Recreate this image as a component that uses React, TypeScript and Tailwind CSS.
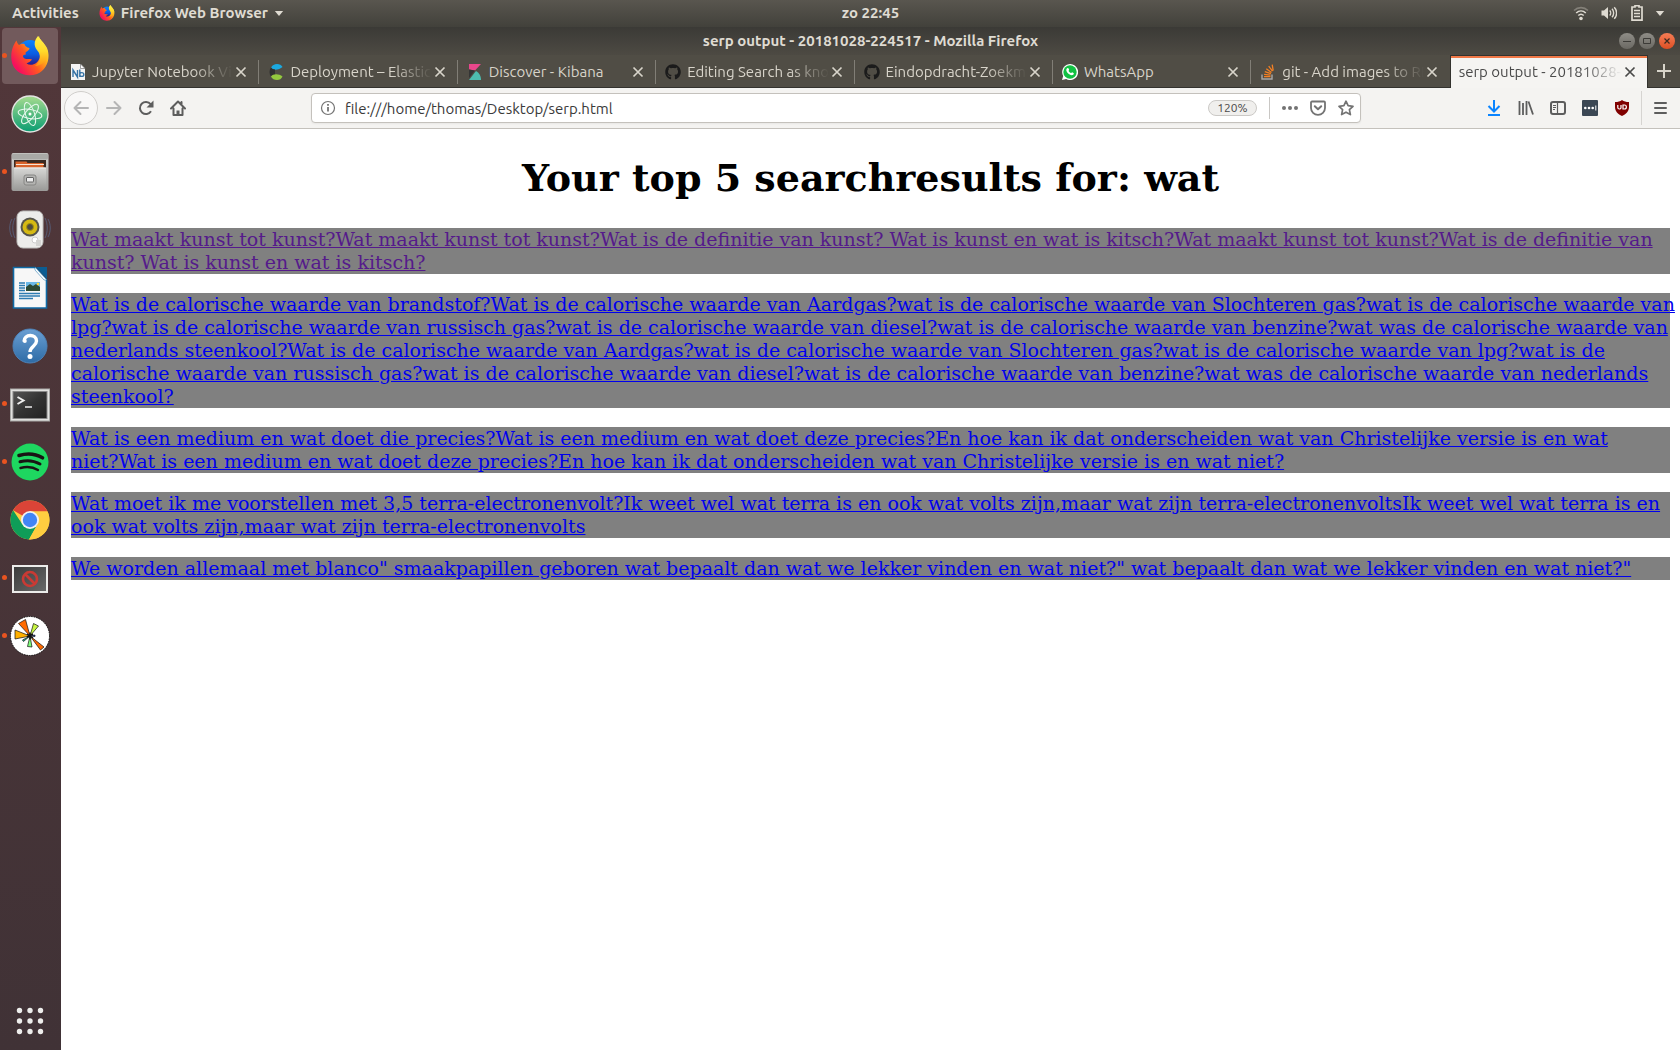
import { Fragment, type ReactNode } from 'react';
import { FaGithub } from 'react-icons/fa';

function FirefoxLogo({ id, className }: { id: string; className: string }) {
  return (
    <svg viewBox="0 0 38 40" className={className} aria-hidden="true">
      <defs>
        <linearGradient id={id + 'body'} x1="0.9" y1="0.1" x2="0.1" y2="0.75">
          <stop offset="0" stopColor="#fff44f" />
          <stop offset="0.3" stopColor="#ffb21a" />
          <stop offset="0.6" stopColor="#ff5a1f" />
          <stop offset="1" stopColor="#f50f5e" />
        </linearGradient>
        <linearGradient id={id + 'tail'} x1="0.3" y1="0" x2="0.3" y2="1">
          <stop offset="0" stopColor="#fff24a" />
          <stop offset="0.5" stopColor="#ffdb2b" />
          <stop offset="1" stopColor="#ff9412" />
        </linearGradient>
        <linearGradient id={id + 'globe'} x1="0.5" y1="0" x2="0.5" y2="1">
          <stop offset="0" stopColor="#0a84ff" />
          <stop offset="0.55" stopColor="#0b5be0" />
          <stop offset="1" stopColor="#2d1480" />
        </linearGradient>
      </defs>
      <circle cx="19" cy="17" r="13" fill={`url(#${id}globe)`} />
      <path
        d="M5.500 4.500 C6 7 7 8 8 9 C10 7.500 12 7.500 13.500 8 C14 10 15.500 11.500 18.500 12 C18.500 14 17 14.500 14.500 16.500 L14.800 18.500 C12 18.500 11.500 20 12.500 21.500 C14 24 19 22.500 21 23.500 C20 25.500 17 26.500 15.500 27.500 C20 30.500 27 28 28.500 22 C30 15 25 12 25.500 6 C26 3 26.500 2 28 0 C28.500 4 33 6 36 12 C40 22 36 34 26 38 C14 42 2 36 0.500 24 C-0.500 16 2 9 5.500 4.500 Z"
        fill={`url(#${id}body)`}
      />
      <path
        d="M27 0 C22 6 23 11 27.500 16 C30 20 30 25 24 30 C31 30 36 25 37 17 C36 10 30 5 27 0 Z"
        fill={`url(#${id}tail)`}
      />
    </svg>
  );
}

function AtomLogo() {
  return (
    <svg viewBox="0 0 40 40" className="size-10" aria-hidden="true">
      <defs>
        <linearGradient id="atombg" x1="0" y1="0" x2="0" y2="1">
          <stop offset="0" stopColor="#a6dc8f" />
          <stop offset="1" stopColor="#0a9d72" />
        </linearGradient>
      </defs>
      <circle cx="20" cy="20" r="18" fill="url(#atombg)" stroke="#e4e4e2" strokeWidth="1.300" />
      <g fill="none" stroke="#e8f8ee" strokeWidth="1">
        <ellipse cx="20" cy="20" rx="12" ry="4.500" transform="rotate(10 20 20)" />
        <ellipse cx="20" cy="20" rx="12" ry="4.500" transform="rotate(72 20 20)" />
        <ellipse cx="20" cy="20" rx="12" ry="4.500" transform="rotate(130 20 20)" />
      </g>
      <circle cx="20" cy="20" r="1.500" fill="#fff" />
    </svg>
  );
}

function FilesLogo() {
  return (
    <svg viewBox="0 0 40 40" className="size-10" aria-hidden="true">
      <defs>
        <linearGradient id="cab" x1="0" y1="0" x2="0" y2="1">
          <stop offset="0" stopColor="#d8d8d6" />
          <stop offset="1" stopColor="#9b9b99" />
        </linearGradient>
      </defs>
      <rect x="1.500" y="1" width="37" height="38" rx="2" fill="url(#cab)" />
      <rect x="2" y="1.500" width="36" height="6" rx="1.500" fill="#a9a9a6" />
      <rect x="4" y="8" width="32" height="8" fill="#3a2a22" />
      <path d="M5.500 9.500h11l1 1.500h16v5h-28z" fill="#d8622a" />
      <path d="M6 12.500h28" stroke="#f6e4d4" strokeWidth="1" />
      <rect x="4" y="15.500" width="32" height="22.500" rx="1" fill="url(#cab)" />
      <path d="M4 16h32" stroke="#f0f0ee" />
      <rect x="14" y="23" width="12" height="10" rx="2" fill="#b4b4b2" stroke="#868684" />
      <rect x="16.500" y="25.500" width="7" height="4.500" rx="0.500" fill="#eee" stroke="#666" />
    </svg>
  );
}

function SpeakerLogo() {
  return (
    <svg viewBox="0 0 44 40" className="h-10 w-11" aria-hidden="true">
      <g fill="none" stroke="#5a6a8c" strokeWidth="1" opacity="0.700">
        <path d="M7 8c-3 6-3 14 0 20M4 9c-3 5-3 13 0 18M37 8c3 6 3 14 0 20M40 9c3 5 3 13 0 18" />
      </g>
      <rect x="9" y="1" width="26" height="37" rx="6" fill="#ececea" stroke="#bdbdbb" />
      <circle cx="22" cy="17" r="9.500" fill="#55544c" />
      <circle cx="22" cy="17" r="7.500" fill="#d5b913" />
      <circle cx="22" cy="17" r="3.500" fill="#4c4a40" stroke="#a8920d" />
      <circle cx="27" cy="30" r="3" fill="#fff" stroke="#ccc" />
      <rect x="28" y="30" width="5" height="6" fill="#d4d4d2" />
    </svg>
  );
}

function WriterLogo() {
  return (
    <svg viewBox="0 0 40 44" className="h-11 w-10" aria-hidden="true">
      <path d="M3.500 1.500H25L36.500 14v28H3.500z" fill="#f7f7f7" stroke="#0f6aa5" strokeWidth="1.600" />
      <path d="M26 1h11v12z" fill="#0b5d93" />
      <path d="M25 1v3l9 10h3z" fill="#fff" stroke="#0f6aa5" strokeWidth="0.500" />
      <g stroke="#2e7cb2" strokeWidth="1.500">
        <path d="M9 17h6M9 19.500h6M9 22h6M9 24.500h6M9 27.500h21M9 30h21M9 32.500h14" />
      </g>
      <rect x="16" y="16" width="14" height="9" fill="#6ab9e8" />
      <path d="M16 25v-4l4-3 3 2 3-2 4 3v4z" fill="#2d4a35" />
      <circle cx="28" cy="18" r="1.300" fill="#ffd93b" />
    </svg>
  );
}

function HelpLogo() {
  return (
    <svg viewBox="0 0 40 40" className="size-10" aria-hidden="true">
      <defs>
        <linearGradient id="helpbg" x1="0" y1="0" x2="0" y2="1">
          <stop offset="0" stopColor="#6a9fd3" />
          <stop offset="1" stopColor="#2e6ca6" />
        </linearGradient>
      </defs>
      <circle cx="20" cy="20" r="17" fill="url(#helpbg)" stroke="#4d82b8" />
      <path d="M14 15.500c0-8 12.500-8 12.500-0.500 0 5-6.500 5.500-6.500 11" fill="none" stroke="#fff" strokeWidth="3.400" />
      <circle cx="14.800" cy="15" r="2" fill="#fff" />
      <circle cx="20" cy="30.500" r="2.500" fill="#fff" />
    </svg>
  );
}

function TerminalLogo() {
  return (
    <svg viewBox="0 0 40 36" className="h-9 w-10" aria-hidden="true">
      <defs>
        <linearGradient id="termbg" x1="0" y1="0" x2="1" y2="1">
          <stop offset="0" stopColor="#555" />
          <stop offset="0.500" stopColor="#333" />
          <stop offset="1" stopColor="#222" />
        </linearGradient>
      </defs>
      <rect x="0.500" y="3" width="39" height="32" fill="#e2e2e0" stroke="#a9a9a7" />
      <rect x="3" y="5.500" width="34" height="27" fill="url(#termbg)" stroke="#888" />
      <path d="M7.500 11l6 3.500-6 3.500" fill="none" stroke="#eee" strokeWidth="2" />
      <path d="M15 21h7" stroke="#eee" strokeWidth="1.500" />
    </svg>
  );
}

function SpotifyLogo() {
  return (
    <svg viewBox="0 0 40 40" className="size-10" aria-hidden="true">
      <circle cx="20" cy="20" r="18.500" fill="#1ed760" />
      <g fill="none" stroke="#191414" strokeLinecap="round">
        <path d="M9 13.500c8-2.500 17-1.500 23.500 2.300" strokeWidth="3.600" />
        <path d="M10 19.800c7-2 14-1.200 20 2.200" strokeWidth="3" />
        <path d="M10.500 26c6-1.600 12.500-1 17.500 2" strokeWidth="2.400" />
      </g>
    </svg>
  );
}

function ChromeLogo() {
  return (
    <svg viewBox="0 0 40 40" className="size-10" aria-hidden="true">
      <circle cx="20" cy="20" r="19.500" fill="#ffcd40" />
      <path d="M20 20L3.100 10.250A19.500 19.500 0 0 1 37.500 11.500H20z" fill="#db4437" />
      <path d="M3.100 10.250A19.500 19.500 0 0 0 19 39.500L27.400 24.500 12.500 24.500z" fill="#0f9d58" />
      <path d="M20 11.500h17.500A19.500 19.500 0 0 1 19 39.500l8.400-15z" fill="#ffcd40" />
      <circle cx="20" cy="20" r="9" fill="#f1f1f1" />
      <circle cx="20" cy="20" r="7.200" fill="#4285f4" />
    </svg>
  );
}

function BlockedWindowLogo() {
  return (
    <svg viewBox="0 0 40 40" className="size-10" aria-hidden="true">
      <defs>
        <linearGradient id="blk" x1="0" y1="0" x2="1" y2="1">
          <stop offset="0" stopColor="#3a3a3a" />
          <stop offset="1" stopColor="#6a6a6a" />
        </linearGradient>
      </defs>
      <rect x="3" y="8" width="34" height="26" fill="url(#blk)" stroke="#ececea" strokeWidth="2" />
      <circle cx="20" cy="21" r="7" fill="none" stroke="#c93a34" strokeWidth="2.600" />
      <path d="M15 16l10 10" stroke="#c93a34" strokeWidth="2.600" />
    </svg>
  );
}

function PlotLogo() {
  return (
    <svg viewBox="0 0 40 40" className="size-10" aria-hidden="true">
      <circle cx="20" cy="20" r="19.500" fill="#fff" stroke="#111" strokeWidth="1" strokeDasharray="1.500 1" />
      <g stroke="#111" strokeWidth="0.700">
        <path d="M20 20L8.500 7.500 15.500 3.500z" fill="#ff6a00" />
        <path d="M20 20L5 14v9z" fill="#ffb000" />
        <path d="M20 20l3.500-12.500 5 2.500z" fill="#c8f542" />
        <path d="M20 20l10.500 14 3.500-3z" fill="#ff6a00" />
        <path d="M20 20l-2.500 10.500 4.500 0.500z" fill="#7dff7a" />
        <path d="M20 20l-7.500 4 1 1.500z" fill="#1fb489" />
        <path d="M20 20l5-1v1.500z" fill="#1030c0" />
      </g>
      <path d="M17 18l6 4M20 16.500v7M17 21l6-3" stroke="#111" strokeWidth="1.500" />
    </svg>
  );
}

function CloseGlyph() {
  return (
    <svg viewBox="0 0 12 12" className="size-3" fill="none" stroke="currentColor" strokeWidth="1.700" aria-hidden="true">
      <path d="M1.500 1.500l9 9M10.500 1.500l-9 9" />
    </svg>
  );
}

type TabData = { title: string; icon?: ReactNode; fades?: boolean };

const tabs: TabData[] = [
  {
    title: 'Jupyter Notebook Vi',
    fades: true,
    icon: (
      <svg viewBox="0 0 16 16" className="size-4" aria-hidden="true">
        <path d="M1 0h9.500L15 4.500V16H1z" fill="#f4f4f4" />
        <path d="M10.500 0v4.500H15z" fill="#fff" stroke="#777" strokeWidth="0.700" />
        <path d="M3 13V6l4.500 7V6M9.800 5.500V13M9.800 10.500c0-2.500 4-2.500 4 0s-4 2.500-4 0" fill="none" stroke="#3673a5" strokeWidth="1.400" />
      </svg>
    ),
  },
  {
    title: 'Deployment – Elastic',
    fades: true,
    icon: (
      <svg viewBox="0 0 16 16" className="size-4" aria-hidden="true">
        <path d="M3 4C4 1 6.500 0 9 0c2.500 0 4.500 1 5.500 3-2 2-6 3-8.500 2.500C4.500 5.200 3.500 4.700 3 4z" fill="#1ba9e1" />
        <path d="M3 3.500C1 6 1 10 3 12.500c1-1 2.500-1.800 4-1.800V5.500C5.500 5.500 4 4.700 3 3.500z" fill="#303030" />
        <path d="M3 12.500C5 9.500 11 9.500 14.500 12.500c-1 2.500-3 3.500-5.500 3.500s-5-1-6-3.500z" fill="#93c83e" />
      </svg>
    ),
  },
  {
    title: 'Discover - Kibana',
    icon: (
      <svg viewBox="0 0 16 16" className="size-4" aria-hidden="true">
        <path d="M2 0h12L8 6.500 2 5.500z" fill="#e8478b" />
        <path d="M2 5.500l6 1L2 14z" fill="#353535" />
        <path d="M2 16L9 7c3 1.500 5 5 5 9z" fill="#4dbdb0" />
      </svg>
    ),
  },
  { title: 'Editing Search as kno', fades: true, icon: <FaGithub className="size-4 text-[#1b1b1b]" /> },
  { title: 'Eindopdracht-Zoekm', fades: true, icon: <FaGithub className="size-4 text-[#1b1b1b]" /> },
  {
    title: 'WhatsApp',
    icon: (
      <svg viewBox="0 0 16 16" className="size-4" aria-hidden="true">
        <path d="M0 16l1.200-4A8 8 0 1 1 4.200 15z" fill="#fff" />
        <circle cx="8" cy="8" r="6.700" fill="#12c143" />
        <path d="M5.200 4.200c1-.8 1.400 0 1.900 1.500.1.500-.7.900-.5 1.300.5 1 1.300 1.700 2.300 2.100.5.100.8-1 1.300-.8l1.600.9c.2 1.300-1 2-2 2C7 10.900 4.200 8 4.300 6c0-.7.300-1.300.9-1.800z" fill="#fff" />
      </svg>
    ),
  },
  {
    title: 'git - Add images to RE',
    fades: true,
    icon: (
      <svg viewBox="0 0 16 16" className="size-4" fill="none" aria-hidden="true">
        <path d="M2 10.500V15h10v-4.500" stroke="#a7a7a7" strokeWidth="1.400" />
        <path d="M4 12.700h6.500M4.100 10.300l6.400.8M4.800 7.600l6.100 2M6.300 4.800l5.200 3.700M8.700 2.200l3.800 5M12.200 0.600l1 6" stroke="#f48024" strokeWidth="1.300" />
      </svg>
    ),
  },
  { title: 'serp output - 20181028-2', fades: true },
];

function Tab({ tab, active }: { tab: TabData; active: boolean }) {
  return (
    <div
      role="tab"
      aria-selected={active}
      className={
        active
          ? 'flex h-full min-w-0 flex-1 items-center border-x border-t border-x-[#33322e] border-t-[#33322e] bg-[#f5f4f2] pr-[11px] pl-2 text-[#4a4a4a] shadow-[inset_0_2px_0_#f07746]'
          : 'flex h-full min-w-0 flex-1 items-center border-b border-[#33322e] pt-px pr-3 pl-[9px] text-[#d8d4ca]'
      }
    >
      {tab.icon && <span className="mr-1.5 shrink-0">{tab.icon}</span>}
      <span
        className={
          tab.fades
            ? 'min-w-0 flex-1 overflow-hidden text-[15px] leading-5 whitespace-nowrap [mask-image:linear-gradient(to_right,black_calc(100%-40px),transparent)]'
            : 'min-w-0 flex-1 overflow-hidden text-[15px] leading-5 whitespace-nowrap'
        }
      >
        {tab.title}
      </span>
      <button type="button" aria-label={'Close ' + tab.title} className="ml-0.5 shrink-0">
        <CloseGlyph />
      </button>
    </div>
  );
}

function ToolButton({ label, children, className }: { label: string; children: ReactNode; className?: string }) {
  return (
    <button type="button" aria-label={label} className={'flex h-8 w-8 shrink-0 items-center justify-center ' + (className ?? 'text-[#5d5d5d]')}>
      {children}
    </button>
  );
}

const stroke = { fill: 'none', stroke: 'currentColor', strokeWidth: 2, 'aria-hidden': true } as const;

const dock: { name: string; running?: boolean; icon: ReactNode }[] = [
  { name: 'Firefox Web Browser', running: true, icon: <FirefoxLogo id="dock" className="h-10 w-[38px]" /> },
  { name: 'Atom', icon: <AtomLogo /> },
  { name: 'Files', running: true, icon: <FilesLogo /> },
  { name: 'Rhythmbox', icon: <SpeakerLogo /> },
  { name: 'LibreOffice Writer', icon: <WriterLogo /> },
  { name: 'Help', icon: <HelpLogo /> },
  { name: 'Terminal', running: true, icon: <TerminalLogo /> },
  { name: 'Spotify', running: true, icon: <SpotifyLogo /> },
  { name: 'Google Chrome', icon: <ChromeLogo /> },
  { name: 'Window', running: true, icon: <BlockedWindowLogo /> },
  { name: 'Plot', running: true, icon: <PlotLogo /> },
];

const results: string[][] = [
  [
    'Wat maakt kunst tot kunst?Wat maakt kunst tot kunst?Wat is de definitie van kunst? Wat is kunst en wat is kitsch?Wat maakt kunst tot kunst?Wat is de definitie van',
    'kunst? Wat is kunst en wat is kitsch?',
  ],
  [
    'Wat is de calorische waarde van brandstof?Wat is de calorische waarde van Aardgas?wat is de calorische waarde van Slochteren gas?wat is de calorische waarde van',
    'lpg?wat is de calorische waarde van russisch gas?wat is de calorische waarde van diesel?wat is de calorische waarde van benzine?wat was de calorische waarde van',
    'nederlands steenkool?Wat is de calorische waarde van Aardgas?wat is de calorische waarde van Slochteren gas?wat is de calorische waarde van lpg?wat is de',
    'calorische waarde van russisch gas?wat is de calorische waarde van diesel?wat is de calorische waarde van benzine?wat was de calorische waarde van nederlands',
    'steenkool?',
  ],
  [
    'Wat is een medium en wat doet die precies?Wat is een medium en wat doet deze precies?En hoe kan ik dat onderscheiden wat van Christelijke versie is en wat',
    'niet?Wat is een medium en wat doet deze precies?En hoe kan ik dat onderscheiden wat van Christelijke versie is en wat niet?',
  ],
  [
    'Wat moet ik me voorstellen met 3,5 terra-electronenvolt?Ik weet wel wat terra is en ook wat volts zijn,maar wat zijn terra-electronenvoltsIk weet wel wat terra is en',
    'ook wat volts zijn,maar wat zijn terra-electronenvolts',
  ],
  [
    'We worden allemaal met blanco" smaakpapillen geboren wat bepaalt dan wat we lekker vinden en wat niet?" wat bepaalt dan wat we lekker vinden en wat niet?"',
  ],
];

function TopBar() {
  return (
    <header className="grid h-[27px] shrink-0 grid-cols-[61px_1fr_auto_1fr] items-center bg-linear-to-b from-[#59564f] to-[#42413b] pb-px text-[15px] leading-5 font-bold text-[#dfdbd2]">
      <div className="col-span-2 flex items-center pl-3">
        <button type="button">Activities</button>
        <button type="button" className="ml-5 flex items-center">
          <FirefoxLogo id="bar" className="mr-1.5 size-4" />
          Firefox Web Browser
          <svg viewBox="0 0 10 6" className="ml-1.5 h-[5px] w-2.5" aria-hidden="true">
            <path d="M0 0h10L5 6z" fill="currentColor" />
          </svg>
        </button>
      </div>
      <time>zo 22:45</time>
      <button type="button" aria-label="System menu" className="flex items-center justify-self-end pr-[15px]">
        <svg viewBox="0 0 16 16" className="mr-3 size-4" fill="none" stroke="currentColor" strokeWidth="1.600" aria-hidden="true">
          <path d="M1 5.500c4-3.800 10-3.800 14 0" opacity="0.350" />
          <path d="M3.200 8c2.800-2.600 6.800-2.600 9.600 0M5.300 10.500c1.600-1.500 3.800-1.500 5.400 0" />
          <circle cx="8" cy="13.500" r="1.800" fill="currentColor" stroke="none" />
        </svg>
        <svg viewBox="0 0 16 16" className="mr-3.5 size-4" fill="none" stroke="currentColor" strokeWidth="1.400" aria-hidden="true">
          <path d="M0.500 5.500h2.500L7 2v12L3 10.500H0.500z" fill="currentColor" stroke="none" />
          <path d="M8.700 5.500c1.300 1.300 1.300 3.700 0 5M11 3.800c2.200 2.200 2.200 6.200 0 8.400M13.200 2.200c3.200 3.200 3.200 8.400 0 11.600" />
        </svg>
        <svg viewBox="0 0 12 16" className="mr-3 h-4 w-3" fill="none" stroke="currentColor" aria-hidden="true">
          <path d="M4 2V0.700h4V2h3v13.200H1V2z" strokeWidth="1.700" />
          <path d="M3 5.500h6M3 8.500h6M3 11.500h6" strokeWidth="1.600" />
        </svg>
        <svg viewBox="0 0 10 6" className="h-[5px] w-2.5" aria-hidden="true">
          <path d="M0 0h10L5 6z" fill="currentColor" />
        </svg>
      </button>
    </header>
  );
}

function Dock() {
  return (
    <nav aria-label="Dock" className="flex w-[61px] shrink-0 flex-col bg-linear-to-b from-[#52373a] to-[#403236]">
      {dock.map((item, i) => (
        <button key={item.name} type="button" aria-label={item.name} className="relative flex h-[58px] w-[60px] shrink-0 items-center justify-center">
          {i === 0 && <span className="absolute inset-x-0.5 inset-y-px rounded-sm bg-[#725a5c]" />}
          {item.running && <span className="absolute top-[26px] left-0.5 size-[5px] rounded-full bg-[#e95420]" />}
          <span className="relative">{item.icon}</span>
        </button>
      ))}
      <button type="button" aria-label="Show Applications" className="mt-auto flex h-[58px] w-[60px] items-center justify-center">
        <svg viewBox="0 0 28 28" className="size-7" fill="#eeeeec" aria-hidden="true">
          {[3.5, 14, 24.5].map((cy) => [3.5, 14, 24.5].map((cx) => <circle key={cx + '-' + cy} cx={cx} cy={cy} r="2.700" />))}
        </svg>
      </button>
    </nav>
  );
}

function WindowTitle() {
  return (
    <div className="relative flex h-7 shrink-0 items-center justify-center bg-linear-to-b from-[#3b3a36] to-[#4d4a43] text-[15px] leading-5 font-bold text-[#dfdbd2]">
      <span>serp output - 20181028-224517 - Mozilla Firefox</span>
      <div className="absolute right-[5px] flex gap-1">
        <button type="button" aria-label="Minimize" className="size-4 rounded-full bg-linear-to-b from-[#8f8d87] to-[#6b6963] text-[#3c3b37]">
          <svg viewBox="0 0 16 16" fill="none" stroke="currentColor" aria-hidden="true"><path d="M4 8.500h8" /></svg>
        </button>
        <button type="button" aria-label="Maximize" className="size-4 rounded-full bg-linear-to-b from-[#8f8d87] to-[#6b6963] text-[#3c3b37]">
          <svg viewBox="0 0 16 16" fill="none" stroke="currentColor" aria-hidden="true"><path d="M4.500 5.500h7v5h-7z" /></svg>
        </button>
        <button type="button" aria-label="Close window" className="size-4 rounded-full bg-linear-to-b from-[#f57c54] to-[#dd4f22] text-[#3c2a20]">
          <svg viewBox="0 0 16 16" fill="none" stroke="currentColor" strokeWidth="1.200" aria-hidden="true"><path d="M5.500 5.500l5 5M10.500 5.500l-5 5" /></svg>
        </button>
      </div>
    </div>
  );
}

function TabStrip() {
  return (
    <div className="flex h-[33px] shrink-0 bg-[#504d45]">
      <div role="tablist" className="flex min-w-0 flex-1">
        {tabs.map((tab, i) => (
          <div key={tab.title} className="relative flex min-w-0 flex-1">
            <Tab tab={tab} active={i === tabs.length - 1} />
            {i < tabs.length - 2 && <span className="absolute top-[5px] right-0 h-6 w-px bg-[#817e76]" />}
          </div>
        ))}
      </div>
      <button type="button" aria-label="New tab" className="flex w-8 items-center justify-center border-b border-[#33322e] text-[#d8d4ca]">
        <svg viewBox="0 0 14 14" className="size-3.5" {...stroke}><path d="M7 0v14M0 7h14" /></svg>
      </button>
    </div>
  );
}

function Toolbar() {
  return (
    <div className="flex h-[41px] shrink-0 items-center border-b border-[#c4c1bc] bg-[#f4f3f1] pr-1 pl-[3px]">
      <button type="button" aria-label="Back" className="flex size-[34px] shrink-0 items-center justify-center rounded-full border border-[#d0cecb] bg-[#f9f8f7] text-[#b5b5b5]">
        <svg viewBox="0 0 16 16" className="size-4" {...stroke} strokeLinecap="round" strokeLinejoin="round"><path d="M15 8H1.500M7.500 2l-6 6 6 6" /></svg>
      </button>
      <ToolButton label="Forward" className="text-[#b5b5b5]">
        <svg viewBox="0 0 16 16" className="size-4" {...stroke} strokeLinecap="round" strokeLinejoin="round"><path d="M1 8h13.500M8.500 2l6 6-6 6" /></svg>
      </ToolButton>
      <ToolButton label="Reload">
        <svg viewBox="0 0 16 16" className="size-4" {...stroke}>
          <path d="M13 11.200A6 6 0 1 1 12.600 4.200" />
          <path d="M15.500 0.500v7h-7z" fill="currentColor" stroke="none" />
        </svg>
      </ToolButton>
      <ToolButton label="Home">
        <svg viewBox="0 0 16 16" className="size-4" {...stroke} strokeLinecap="round" strokeLinejoin="round">
          <path d="M1 8.500L8 1.500l7 7M3.500 8.500V15h9V8.500M11.500 2v3" />
          <path d="M6.500 15v-4.500h3V15z" fill="currentColor" stroke="none" />
        </svg>
      </ToolButton>
      <form className="mx-[117px] flex h-[30px] min-w-0 flex-1 items-center rounded-sm border border-[#c4c1bc] bg-white text-[#737373] shadow-xs" onSubmit={(e) => e.preventDefault()}>
        <svg viewBox="0 0 16 16" className="ml-2 size-4 shrink-0" fill="none" stroke="currentColor" aria-hidden="true">
          <circle cx="8" cy="8" r="6.500" strokeWidth="1.200" />
          <path d="M8 7v4.500M8 4v1.700" strokeWidth="1.800" />
        </svg>
        <input
          type="text"
          aria-label="Address"
          defaultValue="file:///home/thomas/Desktop/serp.html"
          className="min-w-0 flex-1 bg-transparent pt-0.5 pl-[9px] text-[15px] leading-5 text-[#3a3a3a] outline-none"
        />
        <button type="button" aria-label="Reset zoom level" className="h-4 w-[49px] shrink-0 rounded-full border border-[#cbc9c6] bg-[#f0efed] text-xs leading-3.5 text-[#4a4a4a]">
          120%
        </button>
        <span className="mr-3 ml-3 h-[22px] w-px bg-[#c9c7c4]" />
        <button type="button" aria-label="Page actions" className="mr-3">
          <svg viewBox="0 0 16 16" className="size-4" fill="currentColor" aria-hidden="true">
            <circle cx="2" cy="8" r="2" /><circle cx="8" cy="8" r="2" /><circle cx="14" cy="8" r="2" />
          </svg>
        </button>
        <button type="button" aria-label="Save to Pocket" className="mr-3">
          <svg viewBox="0 0 16 16" className="size-4" {...stroke} strokeLinecap="round" strokeLinejoin="round">
            <path d="M2 1.500h12a1 1 0 0 1 1 1V8A7 6.800 0 0 1 1 8V2.500a1 1 0 0 1 1-1z" strokeWidth="1.800" />
            <path d="M4.800 6.300L8 9.300l3.200-3" />
          </svg>
        </button>
        <button type="button" aria-label="Bookmark this page" className="mr-1.5">
          <svg viewBox="0 0 16 16" className="size-4" {...stroke} strokeLinejoin="round">
            <path d="M8 1.200l2.100 4.500 4.900.6-3.600 3.400 1 4.900L8 12.200l-4.400 2.400 1-4.900L1 6.300l4.900-.6z" strokeWidth="1.700" />
          </svg>
        </button>
      </form>
      <ToolButton label="Downloads" className="text-[#0a84ff]">
        <svg viewBox="0 0 14 16" className="h-4 w-3.5" {...stroke}><path d="M7 0v11M1.500 6L7 11.500 12.500 6M1 15h12" /></svg>
      </ToolButton>
      <ToolButton label="Library">
        <svg viewBox="0 0 16 16" className="size-4" {...stroke}><path d="M1.500 1v14M5 3v12M8.500 1v14M10.500 1.500L15 14.500" strokeWidth="1.800" /></svg>
      </ToolButton>
      <ToolButton label="Sidebars">
        <svg viewBox="0 0 16 16" className="size-4" {...stroke}>
          <rect x="1" y="2" width="14" height="12" rx="2" />
          <path d="M7.500 2v12" strokeWidth="1.200" />
          <path d="M3 5.500h3M3 7.500h3M3 9.500h2" strokeWidth="1" />
        </svg>
      </ToolButton>
      <ToolButton label="LastPass">
        <svg viewBox="0 0 16 16" className="size-4" aria-hidden="true">
          <rect width="16" height="16" rx="1" fill="#3b4754" />
          <g fill="#fff"><circle cx="3.300" cy="8" r="1.300" /><circle cx="7" cy="8" r="1.300" /><circle cx="10.700" cy="8" r="1.300" /><rect x="13.300" y="5.500" width="1" height="5" /></g>
        </svg>
      </ToolButton>
      <ToolButton label="uBlock Origin">
        <svg viewBox="0 0 16 16" className="size-4" fill="none" stroke="#fff" aria-hidden="true">
          <path d="M8 0c2 1.400 4 2 7 2v5c0 4.500-3 7-7 9-4-2-7-4.500-7-9V2c3 0 5-.6 7-2z" fill="#800000" stroke="none" />
          <path d="M3.800 5v2.500c0 2 3.200 2 3.200 0V5" strokeWidth="1.200" />
          <path d="M9 5v4h1.500c2.500 0 2.500-4 0-4z" strokeWidth="1.200" />
        </svg>
      </ToolButton>
      <span className="mr-0.5 ml-[3px] h-[34px] w-px bg-[#d6d4d1]" />
      <ToolButton label="Open menu">
        <svg viewBox="0 0 14 14" className="size-3.5" {...stroke} strokeLinecap="round"><path d="M2 2h11M2 7h11M2 12h11" /></svg>
      </ToolButton>
    </div>
  );
}

export default function App() {
  return (
    <div className="flex min-h-screen flex-col bg-white font-['Ubuntu','Noto_Sans',sans-serif]">
      <TopBar />
      <div className="flex flex-1">
        <Dock />
        <div className="flex min-w-0 flex-1 flex-col">
          <WindowTitle />
          <TabStrip />
          <Toolbar />
          <main className="px-2.5 pt-[26px] font-['DejaVu_Serif',serif] text-[19px] leading-[23px]">
            <h1 className="mb-[27px] text-center text-[38px] leading-[46px] font-bold text-black">Your top 5 searchresults for: wat</h1>
            {results.map((lines, i) => (
              <p key={i} className="mb-[19px] bg-[#808080] whitespace-nowrap">
                <a href="#" className={i === 0 ? 'text-[#551a8b] underline' : 'text-[#0000ee] underline'}>
                  {lines.map((line, n) => (
                    <Fragment key={line}>
                      {n > 0 && <br />}
                      {line}
                    </Fragment>
                  ))}
                </a>
              </p>
            ))}
          </main>
        </div>
      </div>
    </div>
  );
}
